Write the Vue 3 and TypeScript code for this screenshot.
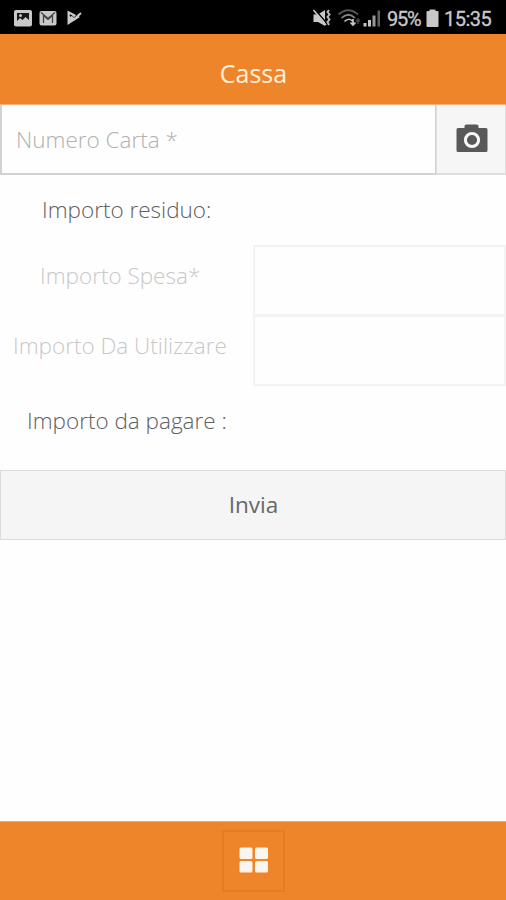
<script setup lang="ts">
import { ref } from 'vue'

const cardNumber = ref('')
const expense = ref('')
const amount = ref('')
</script>

<template>
  <div class="screen">
    <div class="status">
      <svg class="notifications" width="84" height="34" viewBox="0 0 84 34">
        <rect x="14" y="10" width="18" height="16.500" rx="2" fill="#c9c9c9" />
        <path d="M17 13H29V20L25.500 17L22.500 20L20 18L17 21Z" fill="#181818" />
        <circle cx="20.500" cy="15.500" r="1.500" fill="#c9c9c9" />
        <rect x="39.500" y="11" width="17" height="14.500" rx="2" fill="#c9c9c9" />
        <path d="M43.500 23V15.500L48 19.500L52.500 15.500V23M41 12.500L48 18.500L55 12.500" fill="none" stroke="#444" stroke-width="1.300" />
        <path d="M67.500 10.500L80 17L67.500 25Z" fill="#c9c9c9" />
        <path d="M70 15L74 18.500L80 12" fill="none" stroke="#000" stroke-width="1.800" />
        <path d="M71 16.500L74 19.300L81 13" fill="none" stroke="#c9c9c9" stroke-width="2" />
      </svg>
      <div class="indicators">
        <svg width="72" height="34" viewBox="312 0 72 34">
          <path d="M313.500 14.500H318L325 10V26L318 22H313.500Z" fill="#c9c9c9" />
          <path d="M315 9.500L327 23.500" stroke="#000" stroke-width="1.400" />
          <path d="M313.500 10L326 25" stroke="#c9c9c9" stroke-width="1.600" />
          <path d="M329 10l-1.500 2 2 2.500-2 2.500 2 2.500-2 2.500 1.500 3" fill="none" stroke="#b8b8b8" stroke-width="2" />
          <g fill="none" stroke-width="1.700">
            <path d="M338.500 14.500Q348 6 358 14.500" stroke="#555" />
            <path d="M341.500 18Q348.500 11.500 355 18" stroke="#888" />
            <path d="M344.500 21.500Q349 17 353 21.500" stroke="#bbb" />
            <path d="M350.500 22.500l2.500 2.500 2.500-2.500M353 19v6" stroke="#c9c9c9" />
            <path d="M356 21.500l2-2.500 2 2.500M358 19v5" stroke="#444" />
          </g>
          <path d="M363.500 23h3v3.500h-3zM368 20h3v6.500h-3z" fill="#c4c4c4" />
          <path d="M372.500 15.500h3v11h-3z" fill="#999" />
          <path d="M377.500 10.500h2.500v16h-2.500z" fill="#606060" />
        </svg>
        <span class="percent">95%</span>
        <svg class="battery" width="13" height="34" viewBox="0 0 13 34">
          <path d="M3.500 9.500h6V11h2a1 1 0 0 1 1 1v14a1 1 0 0 1-1 1h-10a1 1 0 0 1-1-1V12a1 1 0 0 1 1-1h2z" fill="#c9c9c9" />
        </svg>
        <span class="clock">15:35</span>
      </div>
    </div>
    <header class="header"><h1 class="title">Cassa</h1></header>
    <main>
      <div class="card-row">
        <input v-model="cardNumber" class="card-input" type="text" placeholder="Numero Carta *" />
        <button class="camera" type="button" aria-label="Camera">
          <svg width="32" height="30" viewBox="0 0 32 30">
            <path d="M2 4H8.500V2Q8.500 .5 10.500 .5H20.500Q22.500 .5 22.500 2V4H30Q31.500 4 31.500 5.500V26.500Q31.500 28 30 28H2Q.5 28 .5 26.500V5.500Q.5 4 2 4Z" fill="#595959" />
            <circle cx="16" cy="16" r="6.600" fill="#595959" stroke="#f8f8f8" stroke-width="3" />
          </svg>
        </button>
      </div>
      <div class="row residual"><span>Importo residuo:</span></div>
      <label class="row field"><span class="label spesa">Importo Spesa*</span><input v-model="expense" class="box" type="text" /></label>
      <label class="row field"><span class="label use">Importo Da Utilizzare</span><input v-model="amount" class="box" type="text" /></label>
      <div class="row total"><span>Importo da pagare :</span></div>
      <button class="submit" type="button">Invia</button>
    </main>
    <footer class="footer">
      <button class="grid-button" type="button" aria-label="Menu">
        <svg width="30" height="26" viewBox="0 0 30 26" fill="#fbf5ef">
          <rect x=".5" y=".5" width="13" height="11.500" rx="1.500" />
          <rect x="16" y=".5" width="13" height="11.500" rx="1.500" />
          <rect x=".5" y="14" width="13" height="11.500" rx="1.500" />
          <rect x="16" y="14" width="13" height="11.500" rx="1.500" />
        </svg>
      </button>
    </footer>
  </div>
</template>

<style>
body { margin: 0; background: #fefefe; }
</style>

<style scoped>
.screen { width: 506px; height: 900px; display: flex; flex-direction: column; overflow: hidden; background: #fefefe; color: #606060; font: 300 22.5px/30px "Open Sans", sans-serif; white-space: nowrap; }
.screen * { box-sizing: border-box; }
svg { display: block; flex: none; }
input, button { font: inherit; color: inherit; margin: 0; padding: 0; border-radius: 0; outline: 0; }
.status { height: 34px; flex: none; display: flex; justify-content: space-between; background: #000; color: #c9c9c9; }
.indicators { display: flex; width: 194px; font: 400 20px/38px Roboto, sans-serif; }
.percent { width: 38px; margin-left: 3px; letter-spacing: -1.2px; -webkit-text-stroke: .3px #c9c9c9; }
.battery { margin-left: 1px; }
.clock { margin-left: 5px; letter-spacing: -.5px; -webkit-text-stroke: .3px #c9c9c9; }
.header { height: 71px; flex: none; display: flex; align-items: center; justify-content: center; background: #ef852b; border-bottom: 1px solid #efb27d; }
.title { margin: 7px 0 0 1px; font-size: 25px; line-height: 34px; font-weight: 400; color: #fff0dc; }
main { flex: 1; }
.card-row { display: flex; height: 70px; }
.card-input { width: 436px; border: solid #d2d2d2; border-width: 0 1px 2px 2px; padding: 2px 0 0 14px; background: #fefefe; }
.card-input::placeholder { color: #b0b0b0; opacity: 1; }
.camera { width: 70px; display: flex; align-items: center; justify-content: center; padding-left: 2px; border: solid #dedede; border-width: 0 1px 2px; background: #f6f6f6; }
.row { display: flex; align-items: center; }
.residual { height: 70px; padding: 0 0 1px 42px; }
.field { height: 70px; }
.label { width: 253px; padding-bottom: 9px; color: #c8c8c8; }
.spesa { padding-left: 40px; }
.use { padding-left: 13px; }
.box { width: 253px; height: 71px; border: 2px solid #f3f3f3; background: #fefefe; }
.total { height: 72px; padding-left: 27px; }
.submit { margin-top: 13px; width: 506px; height: 70px; display: flex; align-items: center; justify-content: center; padding-left: 1px; border: 1px solid #dcdcdc; background: #f5f5f5; color: #666; font-weight: 400; }
.footer { height: 79px; flex: none; display: flex; align-items: center; justify-content: center; background: #ef852b; border-top: 1px solid #efaa70; }
.grid-button { width: 63px; height: 62px; margin-left: 1px; display: flex; align-items: center; justify-content: center; background: #ef852b; border: 2px solid #e27d27; padding-bottom: 3px; }
</style>
